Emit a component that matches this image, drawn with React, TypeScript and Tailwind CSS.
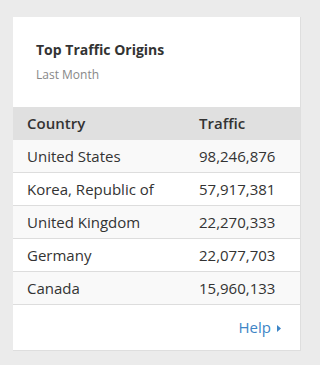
import React from "react";

const rows = [
  ["United States", "98,246,876"],
  ["Korea, Republic of", "57,917,381"],
  ["United Kingdom", "22,270,333"],
  ["Germany", "22,077,703"],
  ["Canada", "15,960,133"],
];

export default function App() {
  return (
    <div
      className="w-[320px] h-[365px] bg-[#ebebeb] pt-[17px] pl-[13px]"
      style={{ fontFamily: '"Open Sans", "Noto Sans", sans-serif' }}
    >
      <div className="w-[288px] bg-white border-r border-b border-[#dedede]">
        <div className="pt-[23px] pb-[24px] pl-[23px]">
          <div className="text-[14px] leading-[20px] font-bold text-[#333]">Top Traffic Origins</div>
          <div className="mt-[6px] text-[12px] leading-[17px] text-[#888]">Last Month</div>
        </div>
        <div className="grid grid-cols-[172px_1fr] h-[33px] items-center bg-[#e0e0e0] text-[15px] font-semibold text-[#333]">
          <div className="pl-[14px]">Country</div>
          <div className="pl-[14px]">Traffic</div>
        </div>
        {rows.map(([c, t], i) => (
          <div
            key={c}
            className={`grid grid-cols-[172px_1fr] h-[33px] items-center border-b border-[#dddddd] text-[15px] text-[#333] ${
              i % 2 === 0 ? "bg-[#f9f9f9]" : "bg-white"
            }`}
          >
            <div className="pl-[14px]">{c}</div>
            <div className="pl-[14px]">{t}</div>
          </div>
        ))}
        <div className="h-[45px] flex items-center justify-end pr-[19px] text-[15px] text-[#3d85c6]">
          <span>Help</span>
          <svg width="4" height="7" viewBox="0 0 4 7" className="ml-[6px] mt-[1px]">
            <path d="M0 0 L4 3.5 L0 7 Z" fill="#3d85c6" />
          </svg>
        </div>
      </div>
    </div>
  );
}
